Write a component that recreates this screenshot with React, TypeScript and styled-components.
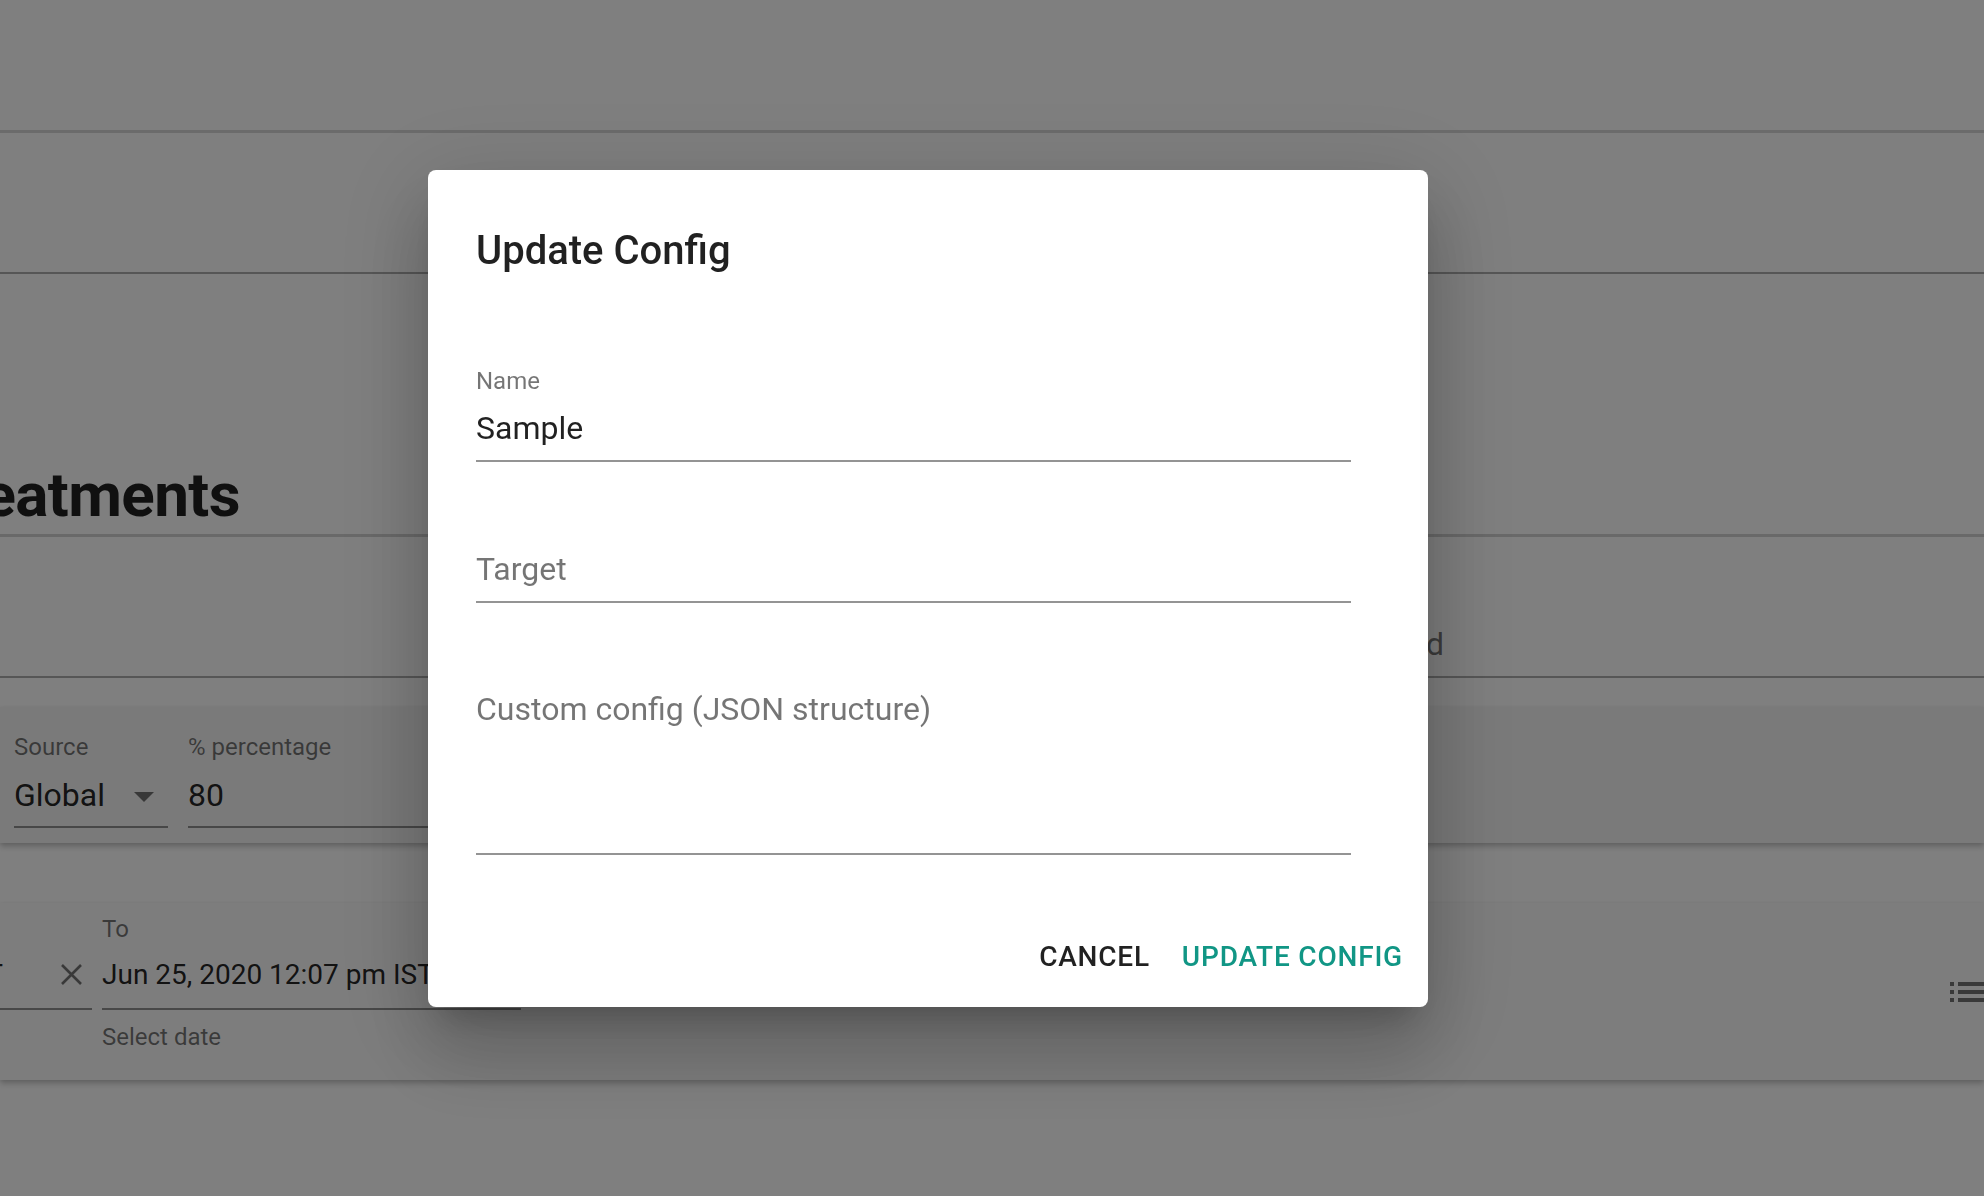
import React from "react";
import styled, { createGlobalStyle } from "styled-components";

const GlobalStyle = createGlobalStyle`
  html, body {
    margin: 0;
    padding: 0;
    overflow: hidden;
    background: #ffffff;
  }
  body {
    font-family: Roboto, "Noto Sans", "Liberation Sans", sans-serif;
  }
  * { box-sizing: border-box; }
`;

/* ---------- underlying page ---------- */

const Page = styled.div`
  width: 1984px;
  height: 1196px;
  display: flex;
  flex-direction: column;
  overflow: hidden;
  background: #ffffff;
`;

const Header = styled.header`
  flex: none;
  height: 133px;
  border-bottom: 3px solid #d6d6d6;
`;

const Toolbar = styled.div`
  flex: none;
  height: 141px;
  border-bottom: 2px solid #adadad;
`;

const HeadingSection = styled.section`
  flex: none;
  height: 263px;
  display: flex;
  align-items: flex-end;
  padding-bottom: 1px;
  border-bottom: 3px solid #d2d2d2;
`;

const HeadingClip = styled.div`
  width: 240px;
  display: flex;
  justify-content: flex-end;
`;

const PageTitle = styled.h1`
  flex: none;
  margin: 0;
  white-space: nowrap;
  font-size: 62px;
  line-height: 76px;
  font-weight: 700;
  letter-spacing: -0.6px;
  color: rgba(0, 0, 0, 0.87);
`;

const FilterRow = styled.div`
  flex: none;
  height: 141px;
  display: flex;
  justify-content: flex-end;
  align-items: flex-end;
  padding: 0 540px 13px 0;
  border-bottom: 2px solid #adadad;
`;

const FilterText = styled.span`
  white-space: nowrap;
  font-size: 32px;
  line-height: 38px;
  color: rgba(0, 0, 0, 0.54);
`;

const Card = styled.div<{ $top: number; $height: number; $bg: string }>`
  flex: none;
  margin-top: ${(p) => p.$top}px;
  height: ${(p) => p.$height}px;
  background: ${(p) => p.$bg};
  box-shadow: 0 4px 6px rgba(0, 0, 0, 0.18), 0 1px 4px rgba(0, 0, 0, 0.1);
  display: flex;
  align-items: flex-start;
  overflow: hidden;
`;

const SourceCard = styled(Card)`
  padding: 28px 0 0 14px;
  gap: 20px;
`;

const DateCard = styled(Card)`
  padding-top: 14px;
`;

const Field = styled.div<{ $width: number; $offset?: number }>`
  flex: none;
  width: ${(p) => p.$width}px;
  margin-left: ${(p) => p.$offset ?? 0}px;
  display: flex;
  flex-direction: column;
`;

const SmallLabel = styled.span`
  font-size: 24px;
  line-height: 24px;
  color: rgba(0, 0, 0, 0.54);
  white-space: nowrap;
`;

const ValueRow = styled.div<{ $gap: number; $pad: number; $end?: boolean }>`
  margin-top: ${(p) => p.$gap}px;
  display: flex;
  align-items: flex-start;
  justify-content: ${(p) => (p.$end ? "flex-end" : "flex-start")};
  padding-bottom: ${(p) => p.$pad}px;
  border-bottom: 2px solid rgba(0, 0, 0, 0.42);
`;

const ValueText = styled.span<{ $size?: number }>`
  flex: none;
  white-space: nowrap;
  font-size: ${(p) => p.$size ?? 32}px;
  line-height: 38px;
  color: rgba(0, 0, 0, 0.87);
`;

const SelectValue = styled(ValueText)`
  flex: 1;
`;

const HelperText = styled(SmallLabel)`
  margin-top: 15px;
`;

const ClearIcon = styled.svg`
  flex: none;
  width: 23px;
  height: 23px;
  margin: 7px 9px 0 57px;
`;

const DropIcon = styled.svg`
  flex: none;
  width: 48px;
  height: 48px;
  margin: -4px 0 -6px 0;
`;

const ListIcon = styled.svg`
  flex: none;
  width: 48px;
  height: 48px;
  margin: 51px -8px 0 auto;
`;

/* ---------- dialog ---------- */

const Backdrop = styled.div`
  position: fixed;
  inset: 0;
  background: rgba(0, 0, 0, 0.5);
  display: flex;
  align-items: flex-start;
  padding: 170px 0 0 428px;
`;

const Dialog = styled.div`
  width: 1000px;
  height: 837px;
  background: #ffffff;
  border-radius: 8px;
  display: flex;
  flex-direction: column;
  box-shadow: 0 22px 30px -14px rgba(0, 0, 0, 0.2),
    0 48px 76px 6px rgba(0, 0, 0, 0.14), 0 18px 92px 16px rgba(0, 0, 0, 0.12);
`;

const DialogTitle = styled.h2`
  margin: 0;
  padding: 59px 48px 0;
  font-size: 40px;
  line-height: 44px;
  font-weight: 500;
  color: rgba(0, 0, 0, 0.87);
`;

const DialogContent = styled.div`
  padding: 96px 77px 0 48px;
  display: flex;
  flex-direction: column;
  gap: 48px;
`;

const FormField = styled.label<{ $lead: number }>`
  display: flex;
  flex-direction: column;
  padding-top: ${(p) => p.$lead}px;
`;

const FloatingLabel = styled.span`
  font-size: 24px;
  line-height: 24px;
  color: rgba(0, 0, 0, 0.54);
  margin-bottom: 16px;
`;

const TextInput = styled.input`
  display: block;
  width: 100%;
  height: 53px;
  margin: 0;
  padding: 0 0 13px;
  border: none;
  border-bottom: 2px solid rgba(0, 0, 0, 0.42);
  outline: none;
  background: transparent;
  font-family: inherit;
  font-size: 32px;
  line-height: 38px;
  color: rgba(0, 0, 0, 0.87);
  &::placeholder {
    color: rgba(0, 0, 0, 0.54);
    opacity: 1;
  }
`;

const TextArea = styled.textarea`
  display: block;
  width: 100%;
  height: 165px;
  margin: 0;
  padding: 0 0 11px;
  border: none;
  border-bottom: 2px solid rgba(0, 0, 0, 0.42);
  outline: none;
  resize: none;
  background: transparent;
  font-family: inherit;
  font-size: 32px;
  line-height: 38px;
  color: rgba(0, 0, 0, 0.87);
  &::placeholder {
    color: rgba(0, 0, 0, 0.54);
    opacity: 1;
  }
`;

const DialogActions = styled.div`
  margin-top: auto;
  display: flex;
  justify-content: flex-end;
  gap: 0;
  padding: 0 9px 14px 0;
`;

const ActionButton = styled.button<{ $color: string }>`
  border: none;
  background: transparent;
  padding: 12px 16px;
  font-family: inherit;
  font-size: 28px;
  line-height: 49px;
  font-weight: 500;
  letter-spacing: 0.8px;
  text-transform: uppercase;
  color: ${(p) => p.$color};
  cursor: pointer;
`;

export default function App() {
  return (
    <>
      <GlobalStyle />
      <Page>
        <Header />
        <Toolbar />
        <HeadingSection>
          <HeadingClip>
            <PageTitle>Treatments</PageTitle>
          </HeadingClip>
        </HeadingSection>
        <FilterRow>
          <FilterText>Sort by updated</FilterText>
        </FilterRow>

        <SourceCard $top={29} $height={136} $bg="#f5f5f5">
          <Field $width={154}>
            <SmallLabel>Source</SmallLabel>
            <ValueRow $gap={17} $pad={12}>
              <SelectValue>Global</SelectValue>
              <DropIcon viewBox="0 0 24 24">
                <path d="M7 10l5 5 5-5z" fill="rgba(0,0,0,0.54)" />
              </DropIcon>
            </ValueRow>
          </Field>
          <Field $width={600}>
            <SmallLabel>% percentage</SmallLabel>
            <ValueRow $gap={17} $pad={12}>
              <ValueText>80</ValueText>
            </ValueRow>
          </Field>
        </SourceCard>

        <DateCard $top={60} $height={177} $bg="#fafafa">
          <Field $width={422} $offset={-330}>
            <SmallLabel>From</SmallLabel>
            <ValueRow $gap={15} $pad={14} $end>
              <ValueText $size={28}>Jun 24, 2020 12:07 pm IST</ValueText>
              <ClearIcon viewBox="0 0 23 23">
                <path
                  d="M2 2L21 21M21 2L2 21"
                  stroke="rgba(0,0,0,0.54)"
                  strokeWidth="2.6"
                  fill="none"
                />
              </ClearIcon>
            </ValueRow>
            <HelperText>Select date</HelperText>
          </Field>
          <Field $width={419} $offset={10}>
            <SmallLabel>To</SmallLabel>
            <ValueRow $gap={15} $pad={14}>
              <ValueText $size={28}>Jun 25, 2020 12:07 pm IST</ValueText>
            </ValueRow>
            <HelperText>Select date</HelperText>
          </Field>
          <ListIcon viewBox="0 0 24 24">
            <path
              d="M3 13h2v-2H3v2zm0 4h2v-2H3v2zm0-8h2V7H3v2zm4 4h14v-2H7v2zm0 4h14v-2H7v2zM7 7v2h14V7H7z"
              fill="rgba(0,0,0,0.54)"
            />
          </ListIcon>
        </DateCard>
      </Page>

      <Backdrop>
        <Dialog role="dialog" aria-labelledby="dlg-title">
          <DialogTitle id="dlg-title">Update Config</DialogTitle>
          <DialogContent>
            <FormField $lead={0}>
              <FloatingLabel>Name</FloatingLabel>
              <TextInput defaultValue="Sample" />
            </FormField>
            <FormField $lead={40}>
              <TextInput placeholder="Target" />
            </FormField>
            <FormField $lead={39}>
              <TextArea rows={4} placeholder="Custom config (JSON structure)" />
            </FormField>
          </DialogContent>
          <DialogActions>
            <ActionButton $color="rgba(0,0,0,0.87)">Cancel</ActionButton>
            <ActionButton $color="#119685">Update Config</ActionButton>
          </DialogActions>
        </Dialog>
      </Backdrop>
    </>
  );
}
